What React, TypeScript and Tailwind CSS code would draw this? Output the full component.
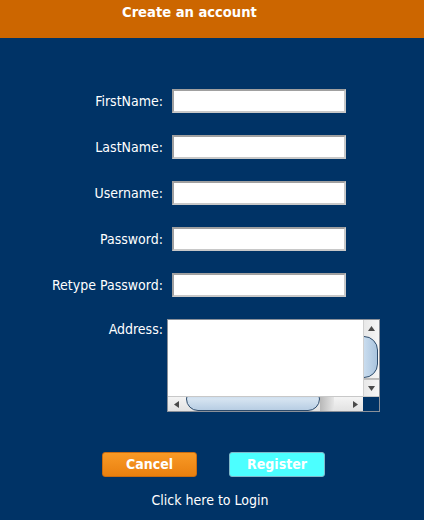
const fields = ["FirstName:", "LastName:", "Username:", "Password:", "Retype Password:"];

const font = { fontFamily: '"DejaVu Sans Condensed", "DejaVu Sans", sans-serif' };

function Arrow({ dir }: { dir: "up" | "down" | "left" | "right" }) {
  const pts = {
    up: "1,6 4.5,1 8,6",
    down: "1,1 4.5,6 8,1",
    left: "6,1 1,4.5 6,8",
    right: "1,1 6,4.5 1,8",
  }[dir];
  const w = dir === "up" || dir === "down" ? 9 : 7;
  const h = dir === "up" || dir === "down" ? 7 : 9;
  return (
    <svg width={w} height={h} viewBox={`0 0 ${w} ${h}`}>
      <polygon points={pts} fill="#4a4a4a" />
    </svg>
  );
}

function AddressBox() {
  return (
    <div className="flex flex-col w-[213px] h-[93px] border border-[#8a9099] bg-white">
      <div className="flex flex-1 min-h-0">
        <textarea className="flex-1 resize-none outline-none p-1 text-[13px] overflow-hidden" />
        {/* vertical scrollbar */}
        <div className="w-[16px] flex flex-col bg-gradient-to-r from-[#e8e8e8] to-[#f6f6f6] border-l border-[#d0d0d0]">
          <div className="h-[16px] flex items-center justify-center">
            <Arrow dir="up" />
          </div>
          <div className="relative flex-1 overflow-hidden">
            <div className="absolute left-[-14px] top-[0px] w-[28px] h-[42px] rounded-full border border-[#2c4a6a] bg-gradient-to-r from-[#f4f8fc] via-[#c9dcee] to-[#a9c4de]" />
            <div className="absolute left-0 top-[42px] w-full h-[10px] bg-gradient-to-b from-[#b8b8b8] to-[#e6e6e6]" />
          </div>
          <div className="h-[16px] flex items-center justify-center">
            <Arrow dir="down" />
          </div>
        </div>
      </div>
      {/* horizontal scrollbar */}
      <div className="h-[15px] flex border-t border-[#c8c8c8]">
        <div className="flex-1 flex bg-gradient-to-b from-[#f4f4f4] to-[#e2e2e2]">
          <div className="w-[16px] flex items-center justify-center">
            <Arrow dir="left" />
          </div>
          <div className="relative flex-1 overflow-hidden">
            <div className="absolute left-[2px] top-[-10px] w-[134px] h-[24px] rounded-[12px] border border-[#2c4a6a] bg-gradient-to-b from-[#a9c4de] via-[#d6e4f1] to-[#b7cde3]" />
            <div className="absolute left-[136px] top-0 w-[14px] h-full bg-gradient-to-r from-[#b8b8b8] to-[#e6e6e6]" />
          </div>
          <div className="w-[16px] flex items-center justify-center">
            <Arrow dir="right" />
          </div>
        </div>
        <div className="w-[16px] bg-[#003366]" />
      </div>
    </div>
  );
}

export default function App() {
  return (
    <div className="w-[424px] h-[520px] flex flex-col bg-[#003366] text-white" style={font}>
      <div className="h-[38px] bg-[#cc6600] pl-[122px] pt-[1px]">
        <h1 className="text-[14.6px] font-bold leading-[22px]">Create an account</h1>
      </div>

      <div className="flex flex-col gap-[22px] pt-[51px]">
        {fields.map((label) => (
          <div key={label} className="flex items-center">
            <label className="w-[163px] text-right text-[14px]">{label}</label>
            <input
              type="text"
              className="ml-[9px] w-[174px] h-[24px] bg-white border-2 border-t-[#a0a0a0] border-l-[#a0a0a0] border-r-[#c8c8c8] border-b-[#c8c8c8] outline-none text-black text-[13px] px-1"
            />
          </div>
        ))}
        <div className="flex items-start">
          <label className="w-[163px] text-right text-[14px]">Address:</label>
          <div className="ml-[4px]">
            <AddressBox />
          </div>
        </div>
      </div>

      <div className="flex gap-[32px] pl-[102px] pt-[40px]">
        <button className="w-[95px] h-[25px] rounded-[3px] border border-[#c96c10] bg-gradient-to-b from-[#f99a25] to-[#e9800e] text-[14px] font-bold">
          Cancel
        </button>
        <button className="w-[96px] h-[25px] rounded-[3px] border border-[#7fb9c9] bg-[#4cffff] text-[14px] font-bold">
          Register
        </button>
      </div>

      <div className="pt-[13px] pr-[4px] text-center text-[14px]">Click here to Login</div>
    </div>
  );
}
